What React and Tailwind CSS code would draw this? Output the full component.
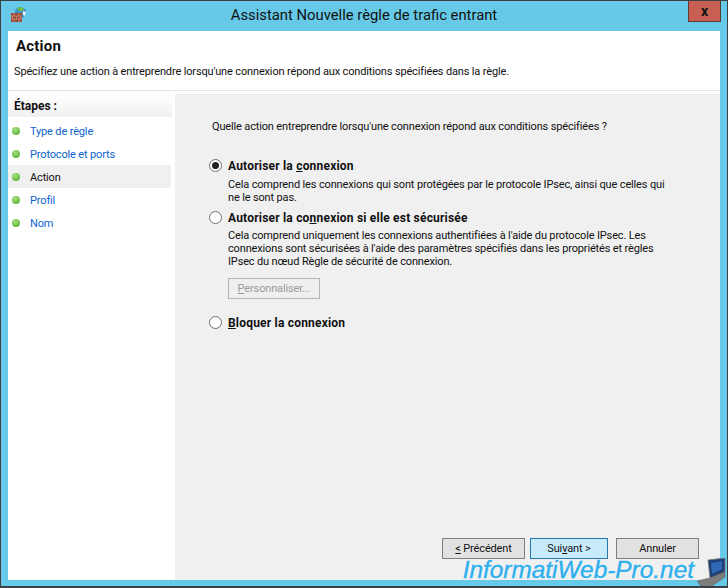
const Radio = ({ checked }) => (
  <span className="w-[13px] h-[13px] rounded-full border border-[#707070] bg-white flex items-center justify-center shrink-0">
    {checked && <span className="w-[7px] h-[7px] rounded-full bg-[#222]" />}
  </span>
);

const FirewallIcon = () => (
  <svg width="16" height="15" viewBox="0 0 16 15" className="block">
    <circle cx="9.5" cy="5.5" r="5.5" fill="#3d8fd0" />
    <path d="M6 1.5c2-1.8 5-1.8 7 0l-1.5 3-3.5-.5z" fill="#6cc04a" />
    <path d="M12 4l3 1-1 4-2-1z" fill="#e8f4fa" />
    <path d="M0 6 H11 V15 H0 Z" fill="#9c4a36" />
    <path d="M0 9H11M0 12H11M3 6V9M8 6V9M1.5 9V12M5.5 9V12M9.5 9V12M3 12V15M8 12V15" stroke="#d0947c" strokeWidth="0.7" fill="none" />
  </svg>
);

const LaptopIcon = () => (
  <svg width="29" height="30" viewBox="0 0 29 30" className="block">
    <path d="M11 2 L28 0 L28 14 L13 20 Z" fill="#1f3f78" stroke="#777" strokeWidth="0.8" />
    <path d="M14 5 L25 3 L25 11 L15 16 Z" fill="#3068b5" />
    <path d="M0 23 L13 20 L28 14 L28 19 L12 30 L3 27 Z" fill="#7d7d7d" stroke="#555" strokeWidth="0.5" />
  </svg>
);

const steps = [
  { label: "Type de règle" },
  { label: "Protocole et ports" },
  { label: "Action", current: true },
  { label: "Profil" },
  { label: "Nom" },
];

const Step = ({ label, current }) => (
  <div className={`h-[23px] flex items-center pl-[4px] gap-[10px] ${current ? "bg-[#f0f0f0]" : ""}`}>
    <span className="w-[8px] h-[8px] rounded-full bg-[radial-gradient(circle_at_40%_30%,#a6e080,#4aa82c)] shrink-0" />
    <span className={`pt-[2px] ${current ? "text-[#111]" : "text-[#0b63ce]"}`}>{label}</span>
  </div>
);

const WinButton = ({ children, primary, className }) => (
  <button
    className={`h-[21px] border flex items-center justify-center text-[#111] ${
      primary ? "w-[78px] bg-[#c8ebfc] border-[#2878b0]" : "w-[83px] bg-[#e1e1e1] border-[#7f7f7f]"
    } ${className || ""}`}
  >
    {children}
  </button>
);

const Choice = ({ checked, className, children }) => (
  <div className={`-ml-[3px] flex items-center gap-[6px] h-[15px] font-bold text-[12px] tracking-[0.2px] ${className}`}>
    <Radio checked={checked} />
    <span className="pt-[2px]">{children}</span>
  </div>
);

const App = () => {
  return (
    <div className="w-[728px] h-[588px] bg-[#67c9e8] border-t border-x border-b-2 border-[#3a4044] overflow-hidden relative flex flex-col font-['Roboto',sans-serif] text-[11px] tracking-[-0.15px] leading-[13px] text-[#111]">
      <div className="h-[30px] flex items-center shrink-0">
        <div className="ml-[10px] mb-[3px]"><FirewallIcon /></div>
        <div className="flex-1 text-center text-[14.8px] tracking-normal pl-[13px] pb-[1px] text-[#111]">Assistant Nouvelle règle de trafic entrant</div>
        <div className="w-[33px] h-[21px] mb-[9px] mr-[6px] bg-[#c75f52] border border-[#5c3a3a] border-t-0 flex items-center justify-center text-[14px] font-bold leading-none">x</div>
      </div>

      <div className="flex-1 mx-[7px] mb-[6px] bg-white flex flex-col min-h-0">
        <div className="h-[60px] shrink-0 border-b border-[#e4e4e4] pl-[6px] pt-[6px]">
          <div className="text-[15px] tracking-[0.2px] font-bold leading-[18px] pl-[2px]">Action</div>
          <div className="mt-[10px]">Spécifiez une action à entreprendre lorsqu'une connexion répond aux conditions spécifiées dans la règle.</div>
        </div>
        <div className="flex-1 flex mt-[3px] min-h-0">
          <div className="w-[165px] shrink-0">
            <div className="h-[23px] pl-[6px] pt-[1px] flex items-center font-bold text-[12px] tracking-normal bg-gradient-to-b from-white to-[#f0f0f0] mr-[1px]">Étapes :</div>
            <div className="pt-[2px] mr-[2px]">
              {steps.map((s) => <Step key={s.label} {...s} />)}
            </div>
          </div>
          <div className="flex-1 ml-[2px] bg-[#f0f0f0] flex flex-col pl-[37px] pt-[26px]">
            <div>Quelle action entreprendre lorsqu'une connexion répond aux conditions spécifiées ?</div>

            <Choice checked className="mt-[25px]">Autoriser la <u>c</u>onnexion</Choice>
            <div className="ml-[16px] mt-[5px] w-[445px]">Cela comprend les connexions qui sont protégées par le protocole IPsec, ainsi que celles qui ne le sont pas.</div>

            <Choice className="mt-[6px]">Autoriser la co<u>n</u>nexion si elle est sécurisée</Choice>
            <div className="ml-[16px] mt-[4px] w-[445px]">Cela comprend uniquement les connexions authentifiées à l'aide du protocole IPsec. Les connexions sont sécurisées à l'aide des paramètres spécifiés dans les propriétés et règles IPsec du nœud Règle de sécurité de connexion.</div>
            <div className="ml-[16px] mt-[10px] w-[92px] h-[21px] border border-[#b5b5b5] bg-[#efefef] text-[#9a9a9a] flex items-center justify-center"><span><u>P</u>ersonnaliser...</span></div>

            <Choice className="mt-[16px]"><u>B</u>loquer la connexion</Choice>

            <div className="mt-auto flex justify-end pr-[21px] pb-[21px]">
              <WinButton className="mr-[5px]"><span><u>&lt;</u> Précédent</span></WinButton>
              <WinButton primary className="mr-[8px]"><span>Sui<u>v</u>ant &gt;</span></WinButton>
              <WinButton>Annuler</WinButton>
            </div>
          </div>
        </div>
      </div>

      {/* watermark */}
      <div className="absolute right-[1px] -bottom-[2px] flex items-end">
        <span className="mb-[5px] mr-[3px] text-[24.4px] leading-[26px] tracking-normal italic text-[#2fafec] [-webkit-text-stroke:0.4px_#2fafec] [text-shadow:0_0_2px_#ffffff] font-['Liberation_Sans',sans-serif]">InformatiWeb-Pro.net</span>
        <LaptopIcon />
      </div>
    </div>
  );
};

export default App;
